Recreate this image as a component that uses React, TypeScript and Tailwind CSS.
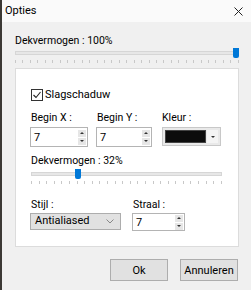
import React from 'react';

function Ticks({ count }: { count: number }) {
  return (
    <div className="flex justify-between h-[3px] mt-[2px]">
      {Array.from({ length: count }).map((_, i) => (
        <div key={i} className="w-px h-full bg-[#c8c8c8]" />
      ))}
    </div>
  );
}

function Slider({ value, ticks }: { value: number; ticks: number }) {
  return (
    <div className="w-full">
      <div className="relative h-[10px] flex items-center">
        <div className="w-full h-[4px] bg-[#e7e7e7] border border-[#d6d6d6]" />
        <div
          className="absolute top-0 w-[6px] h-[10px] bg-[#0078d7] rounded-b-[2px]"
          style={{ left: `calc(${value}% - ${value * 0.06}px)` }}
        />
      </div>
      <Ticks count={ticks} />
    </div>
  );
}

function Spinner() {
  return (
    <div className="flex flex-col gap-px mr-px">
      <div className="w-[8px] h-[7px] bg-[#e6e6e6] flex items-center justify-center">
        <div className="w-0 h-0 border-l-[2px] border-r-[2px] border-b-[2px] border-l-transparent border-r-transparent border-b-[#333]" />
      </div>
      <div className="w-[8px] h-[7px] bg-[#e6e6e6] flex items-center justify-center">
        <div className="w-0 h-0 border-l-[2px] border-r-[2px] border-t-[2px] border-l-transparent border-r-transparent border-t-[#333]" />
      </div>
    </div>
  );
}

function NumberInput({ value, width, height = 'h-[20px]' }: { value: string; width: string; height?: string }) {
  return (
    <div className={`${width} ${height} border border-[#b4b4b4] bg-white flex items-center justify-between pl-[3px]`}>
      <span className="leading-none text-[11px]">{value}</span>
      <Spinner />
    </div>
  );
}

export default function App() {
  return (
    <div
      className="w-[251px] h-[290px] bg-[#f0f0f0] border-l-2 border-[#3c3935] flex flex-col text-[10.5px] text-black"
      style={{ fontFamily: 'Roboto, "Noto Sans", sans-serif' }}
    >
      <div className="h-[22px] bg-[#fafafa] flex items-center justify-between pl-[3px] pr-[8px] text-[11px]">
        <span>Opties</span>
        <svg width="9" height="9" viewBox="0 0 9 9">
          <path d="M0.5 0.5 L8.5 8.5 M8.5 0.5 L0.5 8.5" stroke="#222" strokeWidth="1" />
        </svg>
      </div>

      <div className="flex flex-col pl-[13px] pr-[12px]">
        <div className="mt-[11px] leading-[16px]">Dekvermogen : 100%</div>
        <div className="-mt-px">
          <Slider value={100} ticks={31} />
        </div>

        <div className="mt-[5px] h-[179px] bg-white border border-[#dcdcdc] flex flex-col pl-[15px] pr-[16px]">
          <label className="flex items-center mt-[19px] h-[14px]">
            <div className="w-[12px] h-[12px] border border-[#333] flex items-center justify-center">
              <svg width="10" height="10" viewBox="0 0 10 10">
                <path d="M1.5 5 L4 7.5 L8.5 2" stroke="#222" strokeWidth="1.1" fill="none" />
              </svg>
            </div>
            <span className="ml-[2px] text-[11px]">Slagschaduw</span>
          </label>

          <div className="flex mt-[8px]">
            <div className="flex flex-col w-[66px]">
              <span className="leading-[16px]">Begin X :</span>
              <div className="mt-[1px] -ml-px">
                <NumberInput value="7" width="w-[58px]" />
              </div>
            </div>
            <div className="flex flex-col w-[65px]">
              <span className="leading-[16px]">Begin Y :</span>
              <div className="mt-[1px] -ml-px">
                <NumberInput value="7" width="w-[56px]" />
              </div>
            </div>
            <div className="flex flex-col">
              <span className="leading-[16px]">Kleur :</span>
              <div className="mt-[1px] w-[59px] h-[19px] border border-[#c8c8c8] bg-[#e9e9e9] flex items-center p-[2px] gap-[1px]">
                <div className="flex-1 h-full bg-[#0c0c0c] border border-[#444]" />
                <div className="w-[11px] h-full bg-[#f4f4f4] flex items-center justify-center">
                  <div className="w-0 h-0 border-l-[2px] border-r-[2px] border-t-[2px] border-l-transparent border-r-transparent border-t-[#333]" />
                </div>
              </div>
            </div>
          </div>

          <div className="mt-[6px] leading-[16px]">Dekvermogen : 32%</div>
          <div>
            <Slider value={24} ticks={26} />
          </div>

          <div className="flex mt-[13px]">
            <div className="flex flex-col w-[102px]">
              <span className="leading-[16px]">Stijl :</span>
              <div className="-ml-px w-[91px] h-[17px] border border-[#adadad] bg-[#e1e1e1] flex items-center justify-between pl-[4px] pr-[6px]">
                <span className="text-[11px]">Antialiased</span>
                <svg width="8" height="5" viewBox="0 0 8 5">
                  <path d="M0.5 0.5 L4 4 L7.5 0.5" stroke="#888" strokeWidth="1" fill="none" />
                </svg>
              </div>
            </div>
            <div className="flex flex-col">
              <span className="leading-[16px]">Straal :</span>
              <div className="-ml-px">
                <NumberInput value="7" width="w-[53px]" height="h-[18px]" />
              </div>
            </div>
          </div>
        </div>

        <div className="flex justify-end gap-[12px] mt-[12px] pr-[1px]">
          <button className="w-[58px] h-[22px] bg-[#e1e1e1] border border-[#adadad] leading-none text-[11px]">Ok</button>
          <button className="w-[58px] h-[22px] bg-[#e1e1e1] border border-[#adadad] leading-none text-[11px]">Annuleren</button>
        </div>
      </div>
    </div>
  );
}
